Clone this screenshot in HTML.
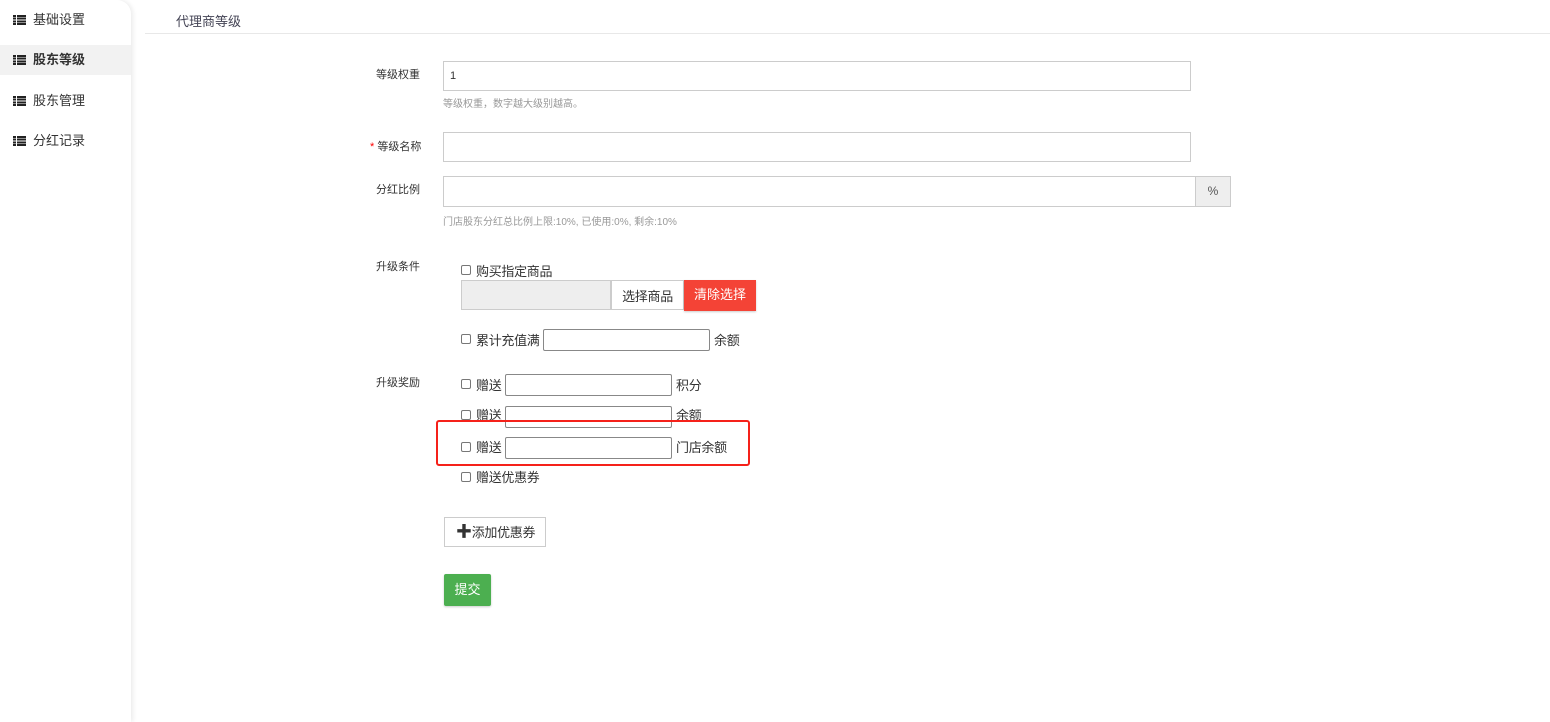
<!DOCTYPE html>
<html><head><meta charset="utf-8"><style>
*{box-sizing:border-box;margin:0;padding:0}
body{width:1550px;height:722px;background:#fff;font-family:"Liberation Sans","Noto Sans CJK SC",sans-serif;color:#333;position:relative;overflow:hidden;font-size:13px}
.a{position:absolute}
.side{left:0;top:0;width:131px;height:722px;background:#fff;border-top-right-radius:14px;box-shadow:2px 0 5px rgba(0,0,0,.08)}
.it{position:absolute;left:0;width:131px;height:30px;line-height:30px;font-size:13px;color:#333}
.it i{position:absolute;left:13px;top:10px;width:13px;height:10px;background:repeating-linear-gradient(#222 0 2px,transparent 2px 2.7px)}
.it i:before{content:"";position:absolute;left:3px;top:0;width:1px;height:10px;background:#fff}
.it span{position:absolute;left:33px}
.lbl{font-size:11px;color:#333;left:376px}
.inp{border:1px solid #ccc;background:#fff}
.hint{font-size:10px;color:#999;left:443px}
.cb{width:10px;height:10px;border:1px solid #777;border-radius:2px;background:#fff}
.t{font-size:13px;color:#333;letter-spacing:-0.3px}
.si{border:1px solid #888;border-radius:2px;background:#fff;height:22px}
</style></head><body>
<div class="a side">
<div class="it" style="top:5px"><i></i><span>基础设置</span></div>
<div class="it" style="top:45px;background:#f2f2f2;font-weight:bold"><i></i><span>股东等级</span></div>
<div class="it" style="top:86px"><i></i><span>股东管理</span></div>
<div class="it" style="top:126px"><i></i><span>分红记录</span></div>
</div>
<div class="a" style="left:176px;top:11px;font-size:13px;color:#445">代理商等级</div>
<div class="a" style="left:145px;top:33px;width:1405px;height:1px;background:#e8e8e8"></div>

<div class="a lbl" style="top:66px">等级权重</div>
<div class="a inp" style="left:443px;top:61px;width:748px;height:30px;padding:8px 6px;font-size:11px">1</div>
<div class="a hint" style="top:95px">等级权重，数字越大级别越高。</div>

<div class="a lbl" style="top:138px;left:370px"><span style="color:red">*</span> 等级名称</div>
<div class="a inp" style="left:443px;top:132px;width:748px;height:30px"></div>

<div class="a lbl" style="top:181px">分红比例</div>
<div class="a inp" style="left:443px;top:176px;width:753px;height:31px"></div>
<div class="a" style="left:1195px;top:176px;width:36px;height:31px;background:#eee;border:1px solid #ccc;text-align:center;line-height:29px;font-size:12px;color:#555">%</div>
<div class="a hint" style="top:213px">门店股东分红总比例上限:10%, 已使用:0%, 剩余:10%</div>

<div class="a lbl" style="top:258px">升级条件</div>
<div class="a cb" style="left:461px;top:265px"></div><div class="a t" style="left:476px;top:261px">购买指定商品</div>
<div class="a" style="left:461px;top:280px;width:150px;height:30px;background:#eee;border:1px solid #ccc"></div>
<div class="a t" style="left:611px;top:280px;width:73px;height:30px;border:1px solid #ccc;line-height:32px;text-align:center">选择商品</div>
<div class="a" style="left:684px;top:280px;width:72px;height:31px;background:#f44336;color:#fff;line-height:30px;text-align:center;box-shadow:0 1px 2px rgba(0,0,0,.2)">清除选择</div>

<div class="a cb" style="left:461px;top:334px"></div><div class="a t" style="left:476px;top:330px">累计充值满</div>
<div class="a si" style="left:543px;top:329px;width:167px"></div><div class="a t" style="left:714px;top:330px">余额</div>

<div class="a lbl" style="top:374px">升级奖励</div>
<div class="a cb" style="left:461px;top:379px"></div><div class="a t" style="left:476px;top:375px">赠送</div>
<div class="a si" style="left:505px;top:374px;width:167px"></div><div class="a t" style="left:676px;top:375px">积分</div>
<div class="a cb" style="left:461px;top:410px"></div><div class="a t" style="left:476px;top:405px">赠送</div>
<div class="a si" style="left:505px;top:406px;width:167px"></div><div class="a t" style="left:676px;top:405px">余额</div>
<div class="a" style="left:436px;top:420px;width:314px;height:46px;border:2px solid #f5211a;border-radius:3px"></div>
<div class="a cb" style="left:461px;top:442px"></div><div class="a t" style="left:476px;top:437px">赠送</div>
<div class="a si" style="left:505px;top:437px;width:167px"></div><div class="a t" style="left:676px;top:437px">门店余额</div>
<div class="a cb" style="left:461px;top:472px"></div><div class="a t" style="left:476px;top:467px">赠送优惠券</div>

<div class="a t" style="left:444px;top:517px;width:102px;height:30px;border:1px solid #ccc;line-height:29px;padding-left:11px"><b style="font-size:16px">✚</b>添加优惠券</div>
<div class="a" style="left:444px;top:574px;width:47px;height:32px;background:#4caf50;color:#fff;line-height:31px;text-align:center;border-radius:2px;box-shadow:0 1px 2px rgba(0,0,0,.2)">提交</div>
</body></html>
